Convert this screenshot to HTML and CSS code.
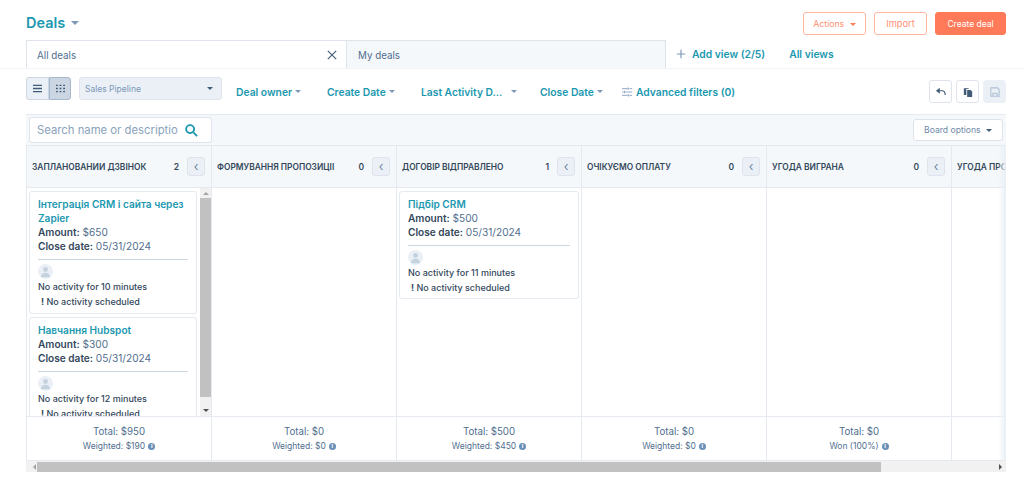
FILE: index.html
```html
<!DOCTYPE html>
<html lang="uk">
<head>
    <meta charset="UTF-8">
    <title>Deals</title>
    <link rel="stylesheet" href="styles.css">
</head>
<body>
    <header class="top">
        <h1 class="title">Deals <i class="caret caret-grey"></i></h1>
        <div class="actions">
            <button class="btn btn-line btn-actions">Actions <i class="caret caret-orange"></i></button>
            <button class="btn btn-line btn-import">Import</button>
            <button class="btn btn-fill">Create deal</button>
        </div>
    </header>

    <nav class="tabs">
        <div class="tab tab-on">All deals
            <svg class="tab-x" viewBox="0 0 12 12"><path d="M1 1l10 10M11 1L1 11"/></svg>
        </div>
        <div class="tab">My deals</div>
        <a class="add-view"><svg viewBox="0 0 12 12"><path d="M6 1v10M1 6h10"/></svg>Add view (2/5)</a>
        <a class="all-views">All views</a>
    </nav>

    <section class="toolbar">
        <div class="toggle">
            <span class="toggle-btn">
                <svg viewBox="0 0 10 10"><path d="M0 1.500h10M0 5h10M0 8.500h10"/></svg>
            </span>
            <span class="toggle-btn toggle-on">
                <svg viewBox="0 0 10 10"><path d="M0 1.500h2M4 1.500h2M8 1.500h2M0 5h2M4 5h2M8 5h2M0 8.500h2M4 8.500h2M8 8.500h2"/></svg>
            </span>
        </div>
        <div class="pipeline">Sales Pipeline <i class="caret caret-dark"></i></div>
        <div class="filters">
            <a class="filter f-owner">Deal owner <i class="caret caret-grey"></i></a>
            <a class="filter f-create">Create Date <i class="caret caret-grey"></i></a>
            <a class="filter f-activity">Last Activity D... <i class="caret caret-grey"></i></a>
            <a class="filter f-close">Close Date <i class="caret caret-grey"></i></a>
            <a class="filter">
                <svg class="sliders" viewBox="0 0 12 12"><path d="M0 2h7M9 2h3M0 6h2M4 6h8M0 10h7M9 10h3M7.500 .5v3M3 4.500v3M8 8.500v3"/></svg>
                Advanced filters (0)
            </a>
        </div>
        <div class="tools">
            <span class="tool">
                <svg viewBox="0 0 12 10"><path class="tool-line" d="M3 3.500h4.500c2.500 0 3.500 2 3.500 5"/><path class="tool-solid" d="M4.500 0v7L0 3.500z"/></svg>
            </span>
            <span class="tool">
                <svg viewBox="0 0 10 12"><path class="tool-solid" d="M0 1.500h5.500l.5 1H3v7H0zM4 3.500h4l2 2v6.500H4z"/></svg>
            </span>
            <span class="tool tool-off">
                <svg viewBox="0 0 12 12"><path class="tool-save" d="M1 1h8l2 2v8H1zM3.500 11V7.500h5V11"/></svg>
            </span>
        </div>
    </section>

    <section class="board">
        <div class="board-bar">
            <div class="search">
                <span class="search-text">Search name or descriptio</span>
                <svg viewBox="0 0 14 14"><circle cx="5.500" cy="5.500" r="4.300"/><path d="M9 9l4 4"/></svg>
            </div>
            <button class="board-options">Board options <i class="caret caret-dark"></i></button>
        </div>

        <div class="columns">
            <div class="col">
                <div class="col-head"><span class="col-name">ЗАПЛАНОВАНИЙ ДЗВІНОК</span><b class="col-count">2</b><span class="collapse">‹</span></div>
                <div class="col-body col-scroll">
                    <div class="cards">
                        <article class="card">
                            <a class="card-title">Інтеграція CRM і сайта через Zapier</a>
                            <p class="card-line"><b>Amount:</b> $650</p>
                            <p class="card-line"><b>Close date:</b> 05/31/2024</p>
                            <hr class="card-rule">
                            <span class="avatar"><svg viewBox="0 0 16 16"><circle cx="8" cy="5.500" r="3"/><path d="M2.500 15c0-4 2.500-5.500 5.500-5.500s5.500 1.500 5.500 5.500z"/></svg></span>
                            <p class="card-note">No activity for 10 minutes</p>
                            <p class="card-note card-warn"><b>!</b> No activity scheduled</p>
                        </article>
                        <article class="card">
                            <a class="card-title">Навчання Hubspot</a>
                            <p class="card-line"><b>Amount:</b> $300</p>
                            <p class="card-line"><b>Close date:</b> 05/31/2024</p>
                            <hr class="card-rule">
                            <span class="avatar"><svg viewBox="0 0 16 16"><circle cx="8" cy="5.500" r="3"/><path d="M2.500 15c0-4 2.500-5.500 5.500-5.500s5.500 1.500 5.500 5.500z"/></svg></span>
                            <p class="card-note">No activity for 12 minutes</p>
                            <p class="card-note card-warn"><b>!</b> No activity scheduled</p>
                        </article>
                    </div>
                    <div class="vbar">
                        <i class="arrow arrow-up"></i>
                        <span class="vbar-thumb"></span>
                        <i class="arrow arrow-down"></i>
                    </div>
                </div>
                <div class="col-foot"><span class="total">Total: $950</span><span class="weighted">Weighted: $190 <i class="info">i</i></span></div>
            </div>

            <div class="col">
                <div class="col-head"><span class="col-name">ФОРМУВАННЯ ПРОПОЗИЦІЇ</span><b class="col-count">0</b><span class="collapse">‹</span></div>
                <div class="col-body"></div>
                <div class="col-foot"><span class="total">Total: $0</span><span class="weighted">Weighted: $0 <i class="info">i</i></span></div>
            </div>

            <div class="col">
                <div class="col-head"><span class="col-name">ДОГОВІР ВІДПРАВЛЕНО</span><b class="col-count">1</b><span class="collapse">‹</span></div>
                <div class="col-body">
                    <div class="cards">
                        <article class="card">
                            <a class="card-title">Підбір CRM</a>
                            <p class="card-line"><b>Amount:</b> $500</p>
                            <p class="card-line"><b>Close date:</b> 05/31/2024</p>
                            <hr class="card-rule">
                            <span class="avatar"><svg viewBox="0 0 16 16"><circle cx="8" cy="5.500" r="3"/><path d="M2.500 15c0-4 2.500-5.500 5.500-5.500s5.500 1.500 5.500 5.500z"/></svg></span>
                            <p class="card-note">No activity for 11 minutes</p>
                            <p class="card-note card-warn"><b>!</b> No activity scheduled</p>
                        </article>
                    </div>
                </div>
                <div class="col-foot"><span class="total">Total: $500</span><span class="weighted">Weighted: $450 <i class="info">i</i></span></div>
            </div>

            <div class="col">
                <div class="col-head"><span class="col-name">ОЧІКУЄМО ОПЛАТУ</span><b class="col-count">0</b><span class="collapse">‹</span></div>
                <div class="col-body"></div>
                <div class="col-foot"><span class="total">Total: $0</span><span class="weighted">Weighted: $0 <i class="info">i</i></span></div>
            </div>

            <div class="col">
                <div class="col-head"><span class="col-name">УГОДА ВИГРАНА</span><b class="col-count">0</b><span class="collapse">‹</span></div>
                <div class="col-body"></div>
                <div class="col-foot"><span class="total">Total: $0</span><span class="weighted">Won (100%) <i class="info">i</i></span></div>
            </div>

            <div class="col">
                <div class="col-head"><span class="col-name">УГОДА ПРОГРАНА</span><b class="col-count">0</b><span class="collapse">‹</span></div>
                <div class="col-body"></div>
                <div class="col-foot"><span class="total">Total: $0</span><span class="weighted">Lost (0%) <i class="info">i</i></span></div>
            </div>
        </div>

        <div class="hbar">
            <i class="arrow arrow-left"></i>
            <span class="hbar-thumb"></span>
            <i class="arrow arrow-right"></i>
        </div>
    </section>
</body>
</html>
```

FILE: styles.css
```css
*{
    box-sizing: border-box;
}
body{
    margin: 0;
    padding: 0;
    height: 479px;
    overflow: hidden;
    background: #fff;
    color: #33475b;
    font-family: "Inter", "Noto Sans", sans-serif;
    font-size: 11px;
}
p, h1{
    margin: 0;
}
button{
    font-family: inherit;
    cursor: pointer;
}
.caret{
    display: inline-block;
    width: 0;
    height: 0;
    margin-left: 3px;
    vertical-align: middle;
    border-style: solid;
    border-width: 3px 3px 0;
    border-color: #7c98b6 transparent transparent;
}
.caret-orange{
    border-top-color: #ff7a59;
}
.caret-dark{
    border-top-color: #425b76;
}

/* header */
.top{
    display: flex;
    justify-content: space-between;
    padding: 12px 18px 0 26px;
    height: 40px;
}
.title{
    color: #1b98b0;
    font-size: 14.500px;
    font-weight: 600;
    line-height: 22px;
}
.title .caret{
    margin-left: 2px;
    margin-bottom: 2px;
    border-width: 4px 4px 0;
}
.actions{
    display: flex;
    gap: 8px;
    height: 23px;
}
.btn{
    padding: 0;
    border: 1px solid #ff7a59;
    border-radius: 3px;
    font-size: 8.700px;
    color: #ff8f73;
    background: #fff;
}
.btn-line{
    border-color: #ffb5a2;
}
.btn-actions{
    width: 63px;
}
.btn-import{
    width: 53px;
    font-size: 9.300px;
}
.btn-fill{
    width: 71px;
    font-size: 8.500px;
    color: #fff;
    background: #ff7a59;
}

/* tabs */
.tabs{
    display: flex;
    align-items: flex-end;
    height: 29px;
    padding-left: 26px;
    border-bottom: 1px solid #f0f3f8;
}
.tab{
    display: flex;
    align-items: center;
    justify-content: space-between;
    width: 320px;
    height: 28px;
    padding: 1px 9px 0 11px;
    border: 1px solid #dfe3eb;
    border-bottom: 0;
    background: #f5f8fa;
    color: #516f90;
    font-size: 9.800px;
}
.tab-on{
    padding-left: 10px;
    border-right: 0;
    background: #fff;
}
.tab-x{
    width: 10px;
    height: 10px;
    fill: none;
    stroke: #425b76;
    stroke-width: 1.400;
}
.add-view, .all-views{
    align-self: center;
    color: #1b98b0;
    font-size: 10.300px;
    font-weight: 600;
}
.add-view{
    display: flex;
    align-items: center;
    margin-left: 10px;
}
.add-view svg{
    width: 10px;
    height: 10px;
    margin-right: 6px;
    fill: none;
    stroke: #7c98b6;
    stroke-width: 1.400;
}
.all-views{
    margin-left: 24px;
}

/* toolbar */
.toolbar{
    display: flex;
    height: 45px;
    padding: 8px 18px 0 26px;
}
.toggle{
    display: flex;
    width: 45px;
    height: 23px;
}
.toggle-btn{
    display: flex;
    align-items: center;
    justify-content: center;
    width: 23px;
    border: 1px solid #cbd6e2;
    border-radius: 3px 0 0 3px;
    background: #eaf0f6;
}
.toggle-on{
    width: 22px;
    border-color: #a5b8cc;
    border-radius: 0 3px 3px 0;
    background: #cbd6e2;
}
.toggle-btn svg{
    width: 9px;
    height: 9px;
    fill: none;
    stroke: #425b76;
    stroke-width: 1.400;
}
.pipeline{
    display: flex;
    align-items: center;
    justify-content: space-between;
    width: 143px;
    height: 23px;
    margin-left: 8px;
    padding: 0 8px 0 5px;
    border: 1px solid #dfe3eb;
    border-radius: 3px;
    background: #eaf0f6;
    color: #7c98b6;
    font-size: 8.500px;
}
.filters{
    display: flex;
    align-items: center;
    height: 29px;
    margin-left: 14px;
    color: #1b98b0;
    font-size: 10.300px;
    font-weight: 600;
}
.filter{
    display: flex;
    align-items: center;
    white-space: nowrap;
}
.f-owner{
    width: 91px;
}
.f-create{
    width: 94px;
}
.f-activity{
    width: 119px;
}
.f-close{
    width: 82px;
}
.f-activity .caret{
    margin-left: 9px;
}
.sliders{
    width: 10px;
    height: 10px;
    margin-right: 4px;
    fill: none;
    stroke: #7c98b6;
    stroke-width: 1;
}
.tools{
    display: flex;
    gap: 4px;
    margin: 3px 0 0 auto;
    height: 23px;
}
.tool{
    display: flex;
    align-items: center;
    justify-content: center;
    width: 23px;
    border: 1px solid #dfe3eb;
    border-radius: 3px;
    background: #fff;
}
.tool svg{
    width: 10px;
    height: 10px;
}
.tool-line{
    fill: none;
    stroke: #425b76;
    stroke-width: 1.400;
}
.tool-solid{
    fill: #425b76;
}
.tool-off{
    background: #eaf0f6;
    border-color: #eaf0f6;
}
.tool-save{
    fill: none;
    stroke: #b0c1d4;
    stroke-width: 1.300;
}

/* board */
.board{
    width: 980px;
    margin-left: 26px;
    border-top: 1px solid #e5eaf1;
}
.board-bar{
    display: flex;
    align-items: center;
    justify-content: space-between;
    height: 31px;
    padding: 0 3px;
    background: #f5f8fa;
    border-bottom: 1px solid #e5eaf1;
}
.search{
    display: flex;
    align-items: center;
    justify-content: space-between;
    width: 183px;
    height: 26px;
    padding: 0 13px 0 7px;
    border: 1px solid #dfe3eb;
    border-radius: 3px;
    background: #fff;
    color: #8ba3bc;
    font-size: 11.300px;
}
.search-text{
    width: 142px;
    white-space: nowrap;
}
.search svg{
    width: 13px;
    height: 13px;
    fill: none;
    stroke: #1b98b0;
    stroke-width: 2;
}
.board-options{
    width: 90px;
    height: 22px;
    padding: 0;
    border: 1px solid #dfe3eb;
    border-radius: 3px;
    background: #fff;
    color: #6f8aa6;
    font-size: 8.600px;
}
.columns{
    position: relative;
    display: flex;
    overflow: hidden;
    height: 314px;
}
/* soft edge where the columns run out of the board */
.columns::after{
    content: "";
    position: absolute;
    top: 0;
    right: 0;
    bottom: 0;
    width: 8px;
    background: linear-gradient(to right, rgba(234, 240, 246, 0), #eaf0f6);
}
.col{
    display: flex;
    flex: 0 0 185px;
    flex-direction: column;
    border-left: 1px solid #e5eaf1;
}
.col-head{
    display: flex;
    align-items: center;
    flex: 0 0 42px;
    padding: 0 6px 0 5px;
    background: #f5f8fa;
    border-bottom: 1px solid #e5eaf1;
}
.col-name{
    flex: 1;
    overflow: hidden;
    color: #33475b;
    font-size: 8.400px;
    font-weight: 600;
    white-space: nowrap;
}
.col-count{
    margin-right: 8px;
    font-size: 8.500px;
    font-weight: 600;
}
.collapse{
    display: flex;
    align-items: center;
    justify-content: center;
    width: 18px;
    height: 19px;
    border: 1px solid #dfe3eb;
    border-radius: 3px;
    background: #eaf0f6;
    color: #516f90;
    font-size: 13px;
    font-weight: 300;
    line-height: 1;
}
.col-body{
    display: flex;
    flex: 0 0 229px;
    overflow: hidden;
    border-bottom: 1px solid #e5eaf1;
}
.cards{
    flex: 1;
    min-width: 0;
    padding: 3px 2px;
}
.col-scroll .cards{
    padding-right: 3px;
}
.card{
    display: block;
    height: 123px;
    margin-bottom: 3px;
    padding: 5px 8px 6px;
    border: 1px solid #e5eaf1;
    border-radius: 3px;
    background: #fff;
}
.col:nth-child(3) .card{
    height: 108px;
}
.card-title{
    display: block;
    margin-right: -4px;
    color: #1b98b0;
    font-size: 10.100px;
    font-weight: 600;
    line-height: 14px;
}
.card-line{
    color: #516f90;
    font-size: 10.100px;
    line-height: 14px;
}
.card-line b{
    color: #33475b;
    font-weight: 600;
}
.card-rule{
    height: 1px;
    margin: 6px 0 4px;
    border: 0;
    background: #cbd6e2;
}
.avatar{
    display: flex;
    align-items: center;
    justify-content: center;
    width: 15px;
    height: 15px;
    border-radius: 50%;
    background: #eaf0f6;
    overflow: hidden;
}
.avatar svg{
    width: 13px;
    height: 13px;
    fill: #c5d2e0;
}
.card-note{
    margin-top: 1px;
    color: #33475b;
    font-size: 9px;
    font-weight: 500;
    line-height: 14px;
}
.card-warn{
    padding-left: 3px;
}
.vbar{
    display: flex;
    flex: 0 0 11px;
    flex-direction: column;
    align-items: center;
    background: #f1f1f1;
}
.vbar-thumb{
    flex: 0 0 199px;
    width: 100%;
    background: #c1c1c1;
}
.arrow{
    display: block;
    width: 0;
    height: 0;
    border-style: solid;
    border-color: transparent;
}
.arrow-up{
    margin: 4px 0 3px;
    border-width: 0 3px 3px;
    border-bottom-color: #a3a3a3;
}
.arrow-down{
    margin-top: 12px;
    border-width: 3px 3px 0;
    border-top-color: #505050;
}
.col-foot{
    display: flex;
    flex: 1;
    flex-direction: column;
    align-items: center;
    padding-top: 8px;
    color: #516f90;
}
.total{
    font-size: 9.700px;
    line-height: 14px;
}
.weighted{
    display: flex;
    align-items: center;
    gap: 3px;
    font-size: 8.500px;
    line-height: 14px;
}
.info{
    display: inline-flex;
    align-items: center;
    justify-content: center;
    width: 7px;
    height: 7px;
    border-radius: 50%;
    background: #6a8fb8;
    color: #fff;
    font-size: 6px;
    font-style: normal;
    font-weight: 700;
}
.hbar{
    display: flex;
    align-items: center;
    height: 12px;
    background: #f1f1f1;
    border-top: 1px solid #e5eaf1;
}
.hbar-thumb{
    width: 844px;
    height: 10px;
    background: #c1c1c1;
}
.arrow-left{
    margin: 0 1px 0 7px;
    border-width: 3px 3px 3px 0;
    border-right-color: #a3a3a3;
}
.arrow-right{
    margin-left: auto;
    margin-right: 4px;
    border-width: 3px 0 3px 3px;
    border-left-color: #505050;
}
```
